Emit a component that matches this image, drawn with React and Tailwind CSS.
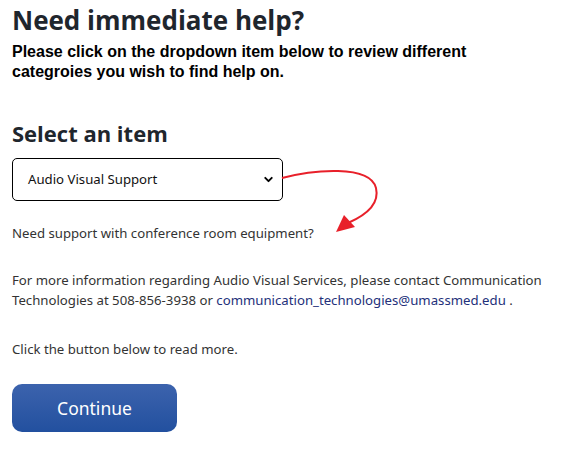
import { ChevronDown } from 'lucide-react';

function CurvedArrow() {
  return (
    <svg
      className="absolute left-[280px] top-[160px]"
      width="110"
      height="80"
      viewBox="0 0 110 80"
      aria-hidden="true"
    >
      <path
        d="M2 18 C 32 10, 90 4, 96 28 C 100 45, 84 56, 68 63"
        fill="none"
        stroke="#e8202a"
        strokeWidth="2"
      />
      <polygon points="56,72 64,55 75,67" fill="#e8202a" />
    </svg>
  );
}

export default function App() {
  return (
    <div className="relative min-h-[451px] bg-white px-3 pt-[3px] font-['Noto_Sans',sans-serif] text-[#333]">
      <h1 className="font-['Open_Sans',sans-serif] text-[26px] font-bold leading-[34px] text-[#1f262d]">
        Need immediate help?
      </h1>
      <p className="mt-[5px] font-['Liberation_Sans',Arial,sans-serif] text-[16px] font-bold leading-[20px] text-black">
        Please click on the dropdown item below to review different
        <br />
        categroies you wish to find help on.
      </p>

      <h2 className="mt-[36px] font-['Open_Sans',sans-serif] text-[22px] font-bold leading-[30px] text-[#1f262d]">
        Select an item
      </h2>

      <div className="mt-[10px] flex h-[43px] w-[271px] items-center justify-between rounded-[5px] border border-black pl-[15px] pr-[7px] text-[13.2px] text-[#111]">
        <span>Audio Visual Support</span>
        <ChevronDown size={13} strokeWidth={3.5} className="text-black" />
      </div>

      <p className="mt-[22px] text-[13.2px] leading-[20px]">
        Need support with conference room equipment?
      </p>

      <p className="mt-[27px] text-[13.2px] leading-[20px]">
        For more information regarding Audio Visual Services, please contact Communication
        Technologies at 508-856-3938 or{' '}
        <a href="#" className="text-[#23307a]">
          communication_technologies@umassmed.edu
        </a>
        {' .'}
      </p>

      <p className="mt-[29px] text-[13.2px] leading-[20px]">
        Click the button below to read more.
      </p>

      <button className="mt-[25px] h-[48px] w-[165px] rounded-[10px] bg-gradient-to-b from-[#3c63ad] to-[#22509f] text-[17.5px] text-white">
        Continue
      </button>

      <CurvedArrow />
    </div>
  );
}
